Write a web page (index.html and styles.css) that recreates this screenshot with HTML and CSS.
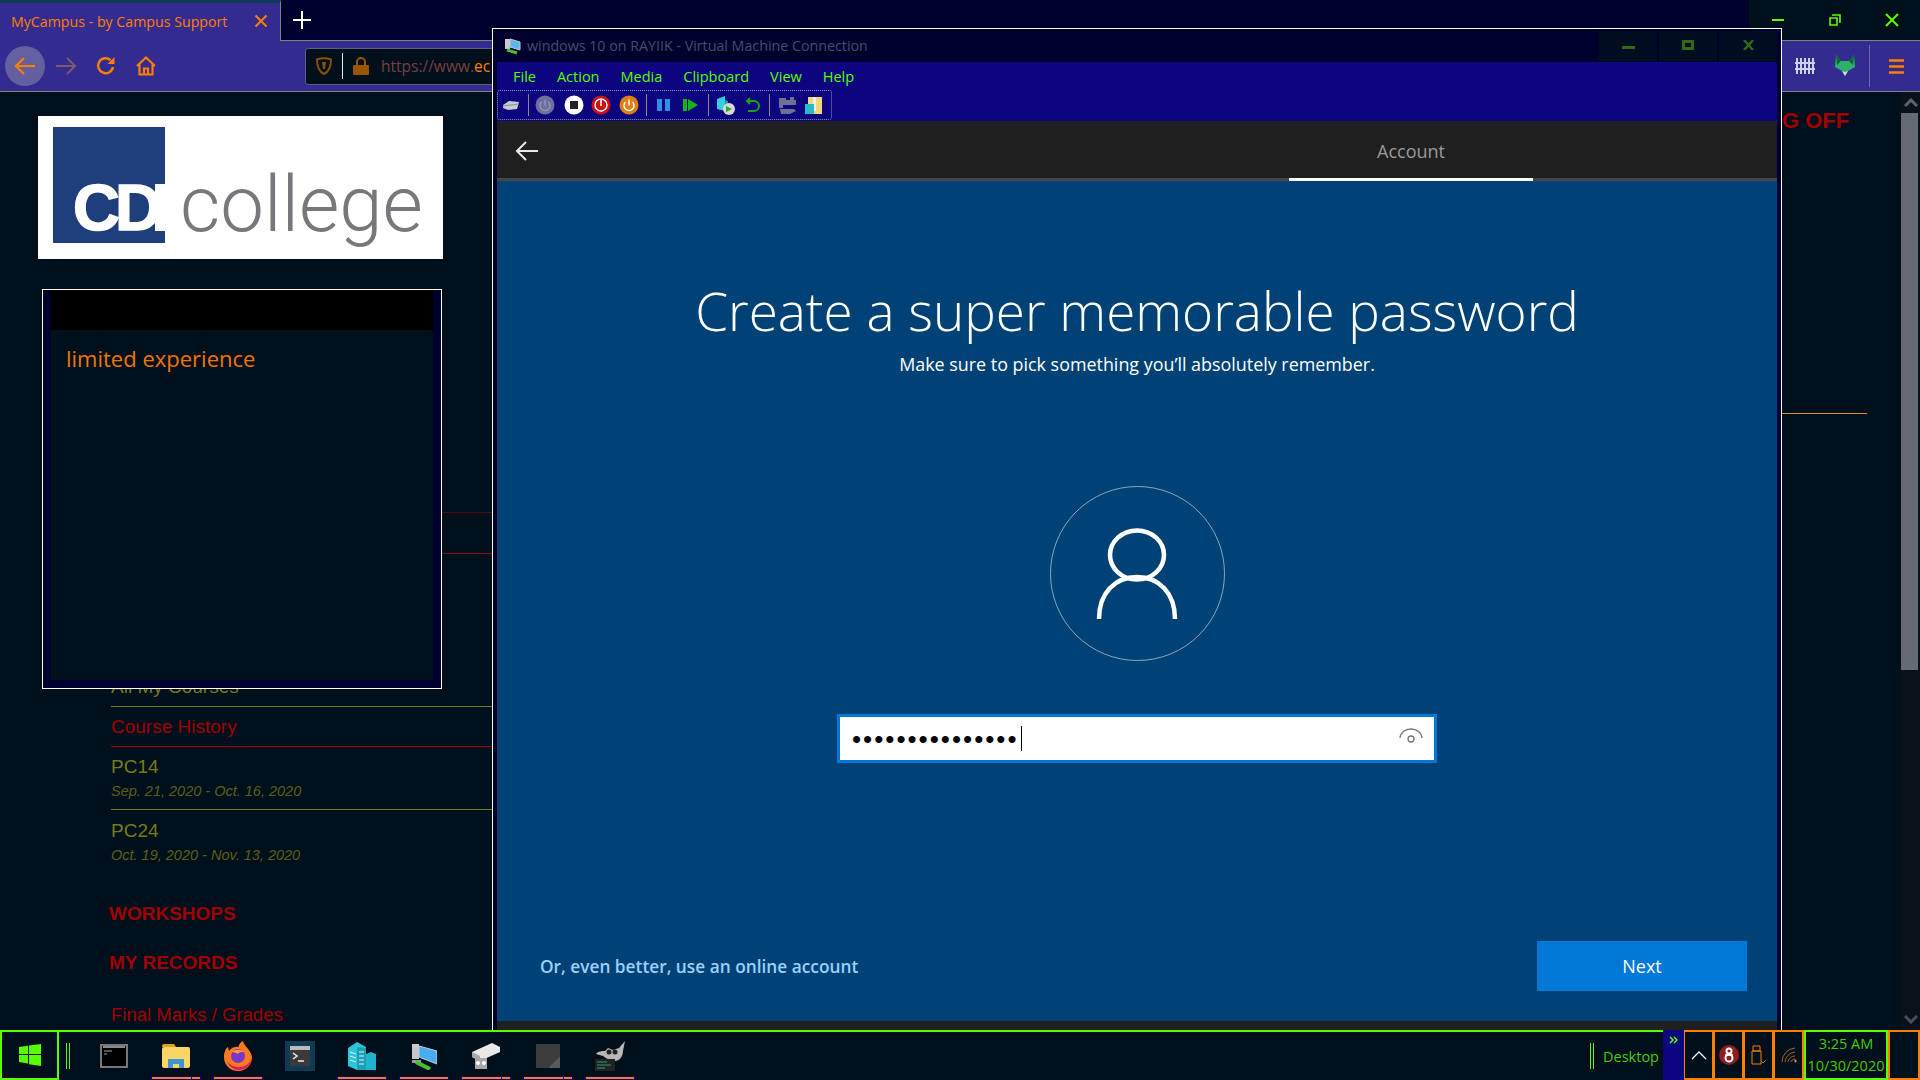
FILE: index.html
```html
<!DOCTYPE html>
<html lang="en">
<head>
<meta charset="UTF-8">
<title>MyCampus - by Campus Support</title>
<link rel="stylesheet" href="styles.css">
</head>
<body>

<!-- Browser behind the VM window -->
<div class="browser">
  <div class="tabstrip">
    <div class="tab">
      <span class="tab-title">MyCampus - by Campus Support</span>
      <svg class="tab-close" width="14" height="14" viewBox="0 0 14 14"><path d="M1.5 1.5l11 11M12.5 1.5l-11 11" stroke="#ff7f00" stroke-width="2"/></svg>
    </div>
    <div class="tab-rest">
      <svg class="new-tab" width="18" height="18" viewBox="0 0 18 18"><path d="M9 0v18M0 9h18" stroke="#fff" stroke-width="2"/></svg>
    </div>
    <div class="win-controls">
      <svg width="12" height="12" viewBox="0 0 12 12"><path d="M0 6h12" stroke="#55ff00" stroke-width="2"/></svg>
      <svg width="12" height="12" viewBox="0 0 12 12"><path d="M1 4h7v7H1zM4 2V1h7v7h-1" fill="none" stroke="#55ff00" stroke-width="1.6"/></svg>
      <svg width="14" height="14" viewBox="0 0 14 14"><path d="M1 1l12 12M13 1L1 13" stroke="#55ff00" stroke-width="2"/></svg>
    </div>
  </div>

  <div class="toolbar">
    <div class="back-btn">
      <svg width="22" height="20" viewBox="0 0 22 20"><path d="M21 10H2M10 2l-8 8 8 8" fill="none" stroke="#ff7f00" stroke-width="2.2"/></svg>
    </div>
    <svg class="fwd" width="22" height="20" viewBox="0 0 22 20"><path d="M1 10h19M12 2l8 8-8 8" fill="none" stroke="#7d5a6a" stroke-width="2"/></svg>
    <svg class="reload" width="20" height="20" viewBox="0 0 20 20"><path d="M17 11a7.5 7.5 0 1 1-2.5-7" fill="none" stroke="#ff7f00" stroke-width="2.4"/><path d="M18.500 1v7h-7z" fill="#ff7f00"/></svg>
    <svg class="home" width="20" height="20" viewBox="0 0 20 20"><path d="M1 10l9-8.500L19 10M3.500 8.500V18.500h13V8.500M8 18.500v-6h4v6" fill="none" stroke="#ff7f00" stroke-width="2.200"/></svg>
    <div class="urlbar">
      <svg width="16" height="18" viewBox="0 0 16 18"><path d="M1 2.500C5 1 11 1 15 2.500 15 10 13 14.500 8 17 3 14.500 1 10 1 2.500z" fill="none" stroke="#8a4f00" stroke-width="2"/><path d="M6 5h4l-1 7H7z" fill="#8a4f00"/></svg>
      <span class="url-sep"></span>
      <svg width="16" height="18" viewBox="0 0 16 18"><path d="M4 8V5a4 4 0 0 1 8 0v3" fill="none" stroke="#995500" stroke-width="2"/><rect y="8" width="16" height="10" rx="1" fill="#995500"/></svg>
      <span class="url-text"><span class="url-dim">https://www.</span><span class="url-host">ec</span></span>
    </div>
    <div class="toolbar-right">
      <svg width="20" height="18" viewBox="0 0 20 18"><path d="M2 1v16M6 1v16M10 1v16M14 1v16M18 1v16M0 6h20M0 12h20" fill="none" stroke="#cfcfe6" stroke-width="2"/></svg>
      <svg width="20" height="22" viewBox="0 0 20 22"><path d="M1 0l5 6h8l5-6 1 12-7 4-3 5-3-5-7-4z" fill="#2faf6c"/><path d="M1 0l5 6-4 4zM19 0l-5 6 4 4z" fill="#086b2d"/><path d="M7 16l3 1 3-1-3 5z" fill="#d5d5e5"/></svg>
      <span class="toolbar-sep"></span>
      <svg width="15" height="15" viewBox="0 0 15 15"><path d="M0 1.500h15M0 7.500h15M0 13.500h15" stroke="#ff7f00" stroke-width="2.400"/></svg>
    </div>
  </div>

  <div class="page">
    <div class="sidebar">
      <div class="logo">
        <div class="logo-mark"><span class="logo-cd">CD</span><span class="logo-strip"></span></div>
        <span class="logo-word">college</span>
      </div>
      <ul class="nav">
        <li class="nav-row row-dim"></li>
        <li class="nav-row row-red-line"></li>
        <li class="nav-row row-courses">All My Courses</li>
        <li class="nav-row row-history">Course History</li>
        <li class="nav-row row-course">PC14<em>Sep. 21, 2020 - Oct. 16, 2020</em></li>
        <li class="nav-row row-course row-last">PC24<em>Oct. 19, 2020 - Nov. 13, 2020</em></li>
      </ul>
      <h3 class="nav-head">WORKSHOPS</h3>
      <h3 class="nav-head">MY RECORDS</h3>
      <p class="nav-link">Final Marks / Grades</p>
    </div>
    <div class="page-right">
      <div class="log-off">G OFF</div>
      <div class="right-line"></div>
    </div>
    <div class="scrollbar">
      <div class="scroll-btn"><svg width="14" height="9" viewBox="0 0 14 9"><path d="M1 8l6-6 6 6" fill="none" stroke="#5d6268" stroke-width="3"/></svg></div>
      <div class="scroll-thumb"></div>
      <div class="scroll-track"><svg width="14" height="9" viewBox="0 0 14 9"><path d="M1 1l6 6 6-6" fill="none" stroke="#4a4f55" stroke-width="3"/></svg></div>
    </div>
  </div>
</div>

<!-- Popup over the sidebar -->
<div class="popup">
  <div class="popup-head"></div>
  <div class="popup-body">limited experience</div>
</div>

<!-- Virtual Machine Connection window -->
<div class="vm">
  <div class="vm-title">
    <svg width="18" height="18" viewBox="0 0 18 18"><path d="M6 2l10 3v8L6 10z" fill="#58b6ee" stroke="#ccc"/><rect x="1" y="2" width="5" height="10" fill="#c9c9c9"/><path d="M3 13l10 3" stroke="#4bbb3f" stroke-width="3"/></svg>
    <span class="vm-title-text">windows 10 on RAYIIK - Virtual Machine Connection</span>
    <div class="vm-controls">
      <span class="vm-ctl"><svg class="ctl-min" width="13" height="3" viewBox="0 0 13 3"><rect width="13" height="3" fill="#2f6b17"/></svg></span>
      <span class="vm-ctl"><svg width="12" height="10" viewBox="0 0 12 10"><rect x="1.500" y="1.500" width="9" height="7" fill="none" stroke="#2f6b17" stroke-width="3"/></svg></span>
      <span class="vm-ctl"><svg width="11" height="10" viewBox="0 0 11 10"><path d="M1 0l9 10M10 0L1 10" stroke="#2f6b17" stroke-width="2.500"/></svg></span>
    </div>
  </div>
  <div class="vm-menu">
    <span>File</span><span>Action</span><span>Media</span><span>Clipboard</span><span>View</span><span>Help</span>
  </div>
  <div class="vm-tools-row">
    <div class="vm-tools">
      <svg width="18" height="12" viewBox="0 0 18 12"><path d="M1 6l6-4 10 1-2 7-9 1-5-2z" fill="#c9c9d6"/><path d="M1 7l16-2" stroke="#8888a0"/></svg>
      <i class="t-sep"></i>
      <svg width="20" height="20" viewBox="0 0 20 20"><circle cx="10" cy="10" r="9.500" fill="#6f6f9e"/><path d="M6.500 7a5 5 0 1 0 7 0M10 4.500v6" fill="none" stroke="#9a9ac0" stroke-width="1.200"/></svg>
      <svg width="20" height="20" viewBox="0 0 20 20"><circle cx="10" cy="10" r="9.500" fill="#fff"/><rect x="6" y="6" width="8" height="8" fill="#222"/></svg>
      <svg width="20" height="20" viewBox="0 0 20 20"><circle cx="10" cy="10" r="9.500" fill="#d00f12"/><circle cx="10" cy="10" r="6" fill="none" stroke="#fff" stroke-width="1.400"/><path d="M10 5v6" stroke="#fff" stroke-width="1.600"/></svg>
      <svg width="20" height="20" viewBox="0 0 20 20"><circle cx="10" cy="10" r="9.500" fill="#e07f10"/><path d="M6.500 7a5 5 0 1 0 7 0M10 4.500v6" fill="none" stroke="#fff" stroke-width="1.400"/></svg>
      <i class="t-sep"></i>
      <svg width="14" height="14" viewBox="0 0 14 14"><path d="M0 1h5v12H0zM8 1h5v12H8z" fill="#2f8fe0"/></svg>
      <svg width="16" height="14" viewBox="0 0 16 14"><path d="M0 1h4v12H0zM5 1l10 6-10 6z" fill="#15b51a"/></svg>
      <i class="t-sep"></i>
      <svg width="20" height="20" viewBox="0 0 20 20"><path d="M1 4l8-3v15l-8-2z" fill="#35cde0"/><path d="M9 5l3 1v8H9z" fill="#1d9bb0"/><circle cx="13" cy="14" r="6" fill="#d8d8d8"/><path d="M10 11l6 3-6 3z" fill="#2ca52c"/></svg>
      <svg width="15" height="16" viewBox="0 0 15 16"><path d="M5 1L2 4l3 3M2.500 4H9a4.500 4.500 0 0 1 0 10H3" fill="none" stroke="#15a51a" stroke-width="2"/></svg>
      <i class="t-sep"></i>
      <svg width="20" height="20" viewBox="0 0 20 20"><path d="M1 3h7v2h4V2h4v3h2v5H5v3H1zM2 14h14l2 2-6 3H3z" fill="#6f6f94"/></svg>
      <svg width="18" height="20" viewBox="0 0 18 20"><path d="M3 2h14v17H3z" fill="#f2d675"/><path d="M8 2h3v14H8z" fill="#eee"/><rect y="9" width="9" height="10" fill="#27b9cc"/></svg>
    </div>
  </div>
  <div class="oobe-head">
    <svg class="oobe-back" width="24" height="20" viewBox="0 0 24 20"><path d="M23 10H2M11 1l-9 9 9 9" fill="none" stroke="#e8e8e8" stroke-width="2"/></svg>
    <span class="oobe-tab">Account</span>
  </div>
  <div class="oobe">
    <h1>Create a super memorable password</h1>
    <p class="oobe-sub">Make sure to pick something you’ll absolutely remember.</p>
    <div class="avatar">
      <svg width="84" height="94" viewBox="0 0 84 94"><ellipse cx="42" cy="28" rx="27" ry="24.500" fill="none" stroke="#fff" stroke-width="4.500"/><path d="M4 92c0-26 16-42 38-42s38 16 38 42" fill="none" stroke="#fff" stroke-width="4.500"/></svg>
    </div>
    <div class="pw-box">
      <span class="pw-dots">•••••••••••••••</span><span class="pw-caret"></span>
      <svg class="pw-eye" width="24" height="16" viewBox="0 0 24 16"><path d="M1 10a11 9 0 0 1 22 0" fill="none" stroke="#777" stroke-width="1.300"/><circle cx="12" cy="11" r="3" fill="none" stroke="#777" stroke-width="1.300"/></svg>
    </div>
    <div class="oobe-foot">
      <span class="oobe-link">Or, even better, use an online account</span>
      <span class="next-btn">Next</span>
    </div>
  </div>
  <div class="oobe-bottom"></div>
</div>

<!-- Taskbar -->
<div class="taskbar">
  <div class="start">
    <svg width="22" height="22" viewBox="0 0 22 22"><path d="M0 3l9-1.300V10H0zM10 1.500L22 0v10H10zM0 11h9v8.500L0 18zM10 11h12v11l-12-1.700z" fill="#55ff00"/></svg>
  </div>
  <span class="double-line"></span>
  <div class="task-list">
    <div class="task">
      <svg width="28" height="24" viewBox="0 0 28 24"><rect x="1" y="1" width="26" height="22" fill="#000" stroke="#777" stroke-width="2"/><path d="M3 3h22" stroke="#888" stroke-width="2"/><path d="M4 7h8M4 10h3" stroke="#aaa"/></svg>
    </div>
    <div class="task">
      <svg width="28" height="24" viewBox="0 0 28 24"><path d="M0 2q0-2 2-2h10l2 3h-14z" fill="#d9a21f"/><rect y="3" width="28" height="21" rx="2" fill="#fbd466"/><path d="M6 24v-9h16v9h-5v-4h-6v4z" fill="#3e94d6"/></svg>
      <i class="bar bar-multi"></i>
    </div>
    <div class="task">
      <svg width="30" height="30" viewBox="0 0 30 30"><path d="M20 0c1 5 8 9 9 16 0 8-6 14-14 14S1 24 1 16c0-5 2-9 4-10l1 4c2-4 8-5 10-4-1-2 2-5 4-6z" fill="#ff7a1f"/><path d="M4 20c2 6 7 9 12 9 6 0 11-4 12-10-3 5-8 8-14 7-4 0-8-3-10-6z" fill="#e3155e"/><circle cx="15" cy="15" r="7" fill="#7a35c9"/><path d="M9 11c3-3 9-3 12 0-3 0-5 0-6 2-2-1-4-2-6-2z" fill="#ff9c30"/></svg>
      <i class="bar"></i>
    </div>
    <div class="task">
      <div class="ps-tile"><svg width="20" height="20" viewBox="0 0 20 20"><rect width="20" height="20" fill="#3a3a3a"/><rect width="20" height="4" fill="#bbb"/><path d="M3 7l4 3-4 3M8 15h6" fill="none" stroke="#eee" stroke-width="1.500"/></svg></div>
    </div>
    <div class="task">
      <svg width="28" height="28" viewBox="0 0 28 28"><path d="M0 6l9-6 9 5v23H9L0 24z" fill="#2bc6da"/><path d="M9 5l9 1v22H9z" fill="#1aa0b8"/><path d="M18 12l5-2 5 2v16H18z" fill="#1fb4cc"/><path d="M2 10l6 2M2 14l6 2M2 18l6 2M11 10h5M11 14h5M11 18h5M11 22h5" stroke="#d8f6fa"/></svg>
      <i class="bar"></i>
    </div>
    <div class="task">
      <svg width="26" height="28" viewBox="0 0 26 28"><path d="M8 4l18 5v13L8 15z" fill="#46aef0" stroke="#ccc"/><path d="M1 2h7v15H1z" fill="#c8c8c8"/><path d="M1 18h9v3H1z" fill="#999"/><path d="M5 20l14 7" stroke="#48c13a" stroke-width="4"/></svg>
      <i class="bar"></i>
    </div>
    <div class="task">
      <svg width="28" height="26" viewBox="0 0 28 26"><path d="M0 9l20-9 8 4v5L8 18l-8-4z" fill="#e8e8e8"/><path d="M0 9l8 4v5l-8-4zM3 15h12v11H3z" fill="#a8a8a8"/><circle cx="6" cy="20" r="2" fill="#fff"/><circle cx="12" cy="20" r="2" fill="#fff"/></svg>
      <i class="bar bar-multi"></i>
    </div>
    <div class="task">
      <svg width="24" height="24" viewBox="0 0 24 24"><path d="M0 0h24v12L12 24H0z" fill="#3c3c3c"/><path d="M24 12v12H12z" fill="#5a5a5a"/></svg>
      <i class="bar bar-multi"></i>
    </div>
    <div class="task">
      <svg width="30" height="30" viewBox="0 0 30 30"><path d="M30 0l-2 10c0 6-4 10-8 10-5 0-9-3-12-5l-7-2c2-3 6-3 9-3l3-3 5 2 6-2z" fill="#b8b8b8"/><circle cx="14" cy="11" r="2.500" fill="#222"/><circle cx="20" cy="11" r="2.500" fill="#222"/><rect y="18" width="20" height="12" fill="#222"/><path d="M2 21h10M2 24h14M2 27h8" stroke="#2a9a7a"/></svg>
      <i class="bar"></i>
    </div>
  </div>
  <div class="tray">
    <span class="double-line"></span>
    <span class="desktop-label">Desktop</span>
    <span class="desktop-more"><svg width="10" height="8" viewBox="0 0 10 8"><path d="M1 1l3 3-3 3M5 1l3 3-3 3" fill="none" stroke="#55ff00" stroke-width="1.500"/></svg></span>
    <span class="tray-box"><svg width="16" height="9" viewBox="0 0 16 9"><path d="M1 8l7-7 7 7" fill="none" stroke="#fff" stroke-width="1.300"/></svg></span>
    <span class="tray-box"><svg width="20" height="20" viewBox="0 0 20 20"><circle cx="10" cy="10" r="10" fill="#8f1d1d"/><circle cx="10" cy="13" r="3.500" fill="none" stroke="#fff" stroke-width="2"/><circle cx="10" cy="6" r="2.500" fill="none" stroke="#fff" stroke-width="2"/><path d="M6 10h8" stroke="#fff" stroke-width="1.500"/></svg></span>
    <span class="tray-box"><svg width="16" height="20" viewBox="0 0 16 20"><path d="M2 1h7v5H2zM1 6h9v13H1z" fill="none" stroke="#ff7f00"/><path d="M10 16l2 2 3-3" fill="none" stroke="#8a6a40"/></svg></span>
    <span class="tray-box"><svg width="16" height="16" viewBox="0 0 16 16"><path d="M1 15A14 14 0 0 1 14 1M4 15A11 11 0 0 1 14 5M7 15a7 7 0 0 1 7-6M10 15a4 4 0 0 1 4-3" fill="none" stroke="#a8651a"/><path d="M13 14h3M14.500 12.500v3" stroke="#ff7f00"/></svg></span>
    <span class="clock"><span>3:25 AM</span><span>10/30/2020</span></span>
    <span class="tray-end"></span>
  </div>
</div>

</body>
</html>
```

FILE: styles.css
```css
* {
  box-sizing: border-box;
}
html, body {
  margin: 0;
  padding: 0;
}
body {
  position: relative;
  width: 1920px;
  height: 1080px;
  overflow: hidden;
  display: flex;
  flex-direction: column;
  background-color: #000f1c;
  font-family: "Liberation Sans", Arial, sans-serif;
}
svg {
  display: block;
  flex: none;
}

/* browser */
.browser {
  height: 1030px;
  display: flex;
  flex-direction: column;
}
.tabstrip {
  height: 41px;
  display: flex;
  background-color: #00002e;
  font-family: "Open Sans", sans-serif;
}
.tab {
  width: 281px;
  border-top: 3px solid #0f3a5a;
  border-right: 1px solid #808080;
  background-color: #332b8f;
  display: flex;
  align-items: center;
  padding: 0 12px 2px 11px;
  justify-content: space-between;
}
.tab-title {
  color: #ff7f00;
  font-size: 14.2px;
  white-space: nowrap;
}
.tab-rest {
  flex: 1;
  border-bottom: 1px solid #808080;
  padding: 11px 0 0 12px;
}
.win-controls {
  width: 171px;
  background-color: #000f1c;
  border-bottom: 1px solid #808080;
  display: flex;
  align-items: center;
  padding: 0 21px 0 23px;
  justify-content: space-between;
}
.toolbar {
  height: 51px;
  background-color: #332b8f;
  border-bottom: 1px solid #808080;
  display: flex;
  align-items: center;
}
.back-btn {
  width: 40px;
  height: 40px;
  margin-left: 5px;
  border-radius: 50%;
  background-color: #645f9f;
  display: flex;
  align-items: center;
  justify-content: center;
}
.fwd {
  margin-left: 10px;
}
.reload {
  margin-left: 19px;
}
.home {
  margin-left: 20px;
}
.urlbar {
  width: 400px;
  height: 37px;
  margin-left: 149px;
  background-color: #000f1c;
  border: 1px solid #5d5d80;
  border-radius: 3px;
  display: flex;
  align-items: center;
  padding-left: 10px;
  overflow: hidden;
}
.url-sep {
  width: 1px;
  height: 26px;
  margin: 0 10px;
  background-color: #eee;
}
.url-text {
  margin-left: 12px;
  font-family: "Open Sans", sans-serif;
  font-size: 15.5px;
  white-space: nowrap;
}
.url-dim {
  color: #7a4040;
}
.url-host {
  color: #ff7f00;
}
.toolbar-right {
  margin-left: auto;
  width: 125px;
  display: flex;
  align-items: center;
}
.toolbar-right svg:nth-child(2) {
  margin-left: 20px;
}
.toolbar-sep {
  width: 1px;
  height: 42px;
  margin: 0 19px 0 14px;
  background-color: #6d68a8;
}

/* page */
.page {
  flex: 1;
  min-height: 0;
  display: flex;
  overflow: hidden;
}
.sidebar {
  width: 1782px;
  padding-top: 24px;
}
.logo {
  width: 405px;
  height: 143px;
  margin-left: 38px;
  background-color: #fff;
  display: flex;
  padding: 11px 0 0 15px;
}
.logo-mark {
  position: relative;
  width: 112px;
  height: 116px;
  background-color: #1f3f7c;
}
.logo-cd {
  position: absolute;
  left: 20px;
  top: 48px;
  color: #fff;
  font-size: 65px;
  line-height: 66px;
  font-weight: bold;
  letter-spacing: -5px;
  -webkit-text-stroke: 1.5px #fff;
}
.logo-strip {
  position: absolute;
  right: 0;
  top: 57px;
  width: 10px;
  height: 47px;
  background-color: #fff;
}
.logo-word {
  margin: 33px 0 0 15px;
  color: #77777c;
  font-family: Roboto, sans-serif;
  font-weight: 300;
  font-size: 78px;
  line-height: 90px;
}
.nav {
  list-style: none;
  margin: 0 0 0 111px;
  padding: 0;
  width: 381px;
}
.nav-row {
  height: 40px;
  border-bottom: 1px solid #7a7a14;
  color: #7a7a14;
  font-size: 19px;
  line-height: 21px;
  padding-bottom: 9px;
  display: flex;
  flex-direction: column;
  justify-content: flex-end;
}
.nav-row em {
  font-size: 14.5px;
  line-height: 20px;
  margin-top: 4px;
  color: #5f5f14;
}
.row-dim {
  height: 254px;
  border-bottom-color: #4a1010;
}
.row-red-line {
  height: 41px;
  border-bottom-color: #8a1010;
}
.row-courses {
  height: 153px;
}
.row-history {
  color: #a00000;
  border-bottom-color: #a00000;
}
.row-course {
  height: 63px;
  padding-bottom: 8px;
}
.row-last {
  border-bottom: 0;
  height: 64px;
  padding-bottom: 9px;
}
.nav-head {
  margin: 0 0 28px;
  padding-left: 109px;
  color: #a00000;
  font-size: 19px;
  line-height: 21px;
  font-weight: bold;
}
.nav-head:first-of-type {
  margin-top: 29px;
}
.nav-link {
  margin: 31px 0 0;
  padding-left: 111px;
  color: #a00000;
  font-size: 18.5px;
  line-height: 21px;
}
.page-right {
  width: 119px;
  padding-top: 16px;
}
.log-off {
  color: #a00000;
  font-size: 22px;
  line-height: 26px;
  font-weight: bold;
}
.right-line {
  width: 85px;
  height: 1px;
  margin-top: 279px;
  background-color: #e88a2c;
}
.scrollbar {
  width: 19px;
  display: flex;
  flex-direction: column;
  background-color: #0a111a;
}
.scroll-btn {
  height: 21px;
  display: flex;
  align-items: center;
  justify-content: center;
}
.scroll-thumb {
  height: 557px;
  width: 17px;
  background-color: #666b73;
}
.scroll-track {
  flex: 1;
  display: flex;
  align-items: flex-end;
  justify-content: center;
  padding-bottom: 6px;
}

/* popup */
.popup {
  position: absolute;
  left: 42px;
  top: 289px;
  width: 400px;
  height: 400px;
  border: 1px solid #fff;
  background-color: #00002e;
  padding: 0 8px 8px;
  display: flex;
  flex-direction: column;
}
.popup-head {
  height: 40px;
  background-color: #000;
}
.popup-body {
  flex: 1;
  background-color: #000f1c;
  color: #ef7600;
  font-family: "Open Sans", sans-serif;
  font-size: 22px;
  padding: 13px 15px;
}

/* vm window */
.vm {
  position: absolute;
  left: 492px;
  top: 28px;
  width: 1290px;
  height: 1002px;
  border: solid #fff;
  border-width: 1px 1px 0;
  background-color: #00002e;
  padding: 0 4px 0;
  display: flex;
  flex-direction: column;
}
.vm-title {
  height: 33px;
  display: flex;
  align-items: center;
  padding-left: 7px;
  font-family: "Open Sans", sans-serif;
}
.vm-title-text {
  margin-left: 5px;
  color: #4c4c66;
  font-size: 14.25px;
  white-space: nowrap;
}
.vm-controls {
  margin-left: auto;
  display: flex;
  align-self: flex-start;
  gap: 2px;
  padding-top: 2px;
}
.vm-ctl {
  width: 58px;
  height: 30px;
  padding-bottom: 3px;
  background-color: #000d20;
  display: flex;
  align-items: center;
  justify-content: center;
}
.ctl-min {
  margin-top: 6px;
}
.vm-menu {
  height: 29px;
  background-color: #0d0480;
  display: flex;
  align-items: center;
  padding-left: 16px;
  gap: 21px;
  color: #55ff00;
  font-family: "Open Sans", sans-serif;
  font-size: 14.5px;
}
.vm-tools-row {
  height: 30px;
  background-color: #0d0480;
}
.vm-tools {
  width: 335px;
  height: 30px;
  margin-top: -1px;
  border: 1px dotted #8f8fc0;
  border-radius: 3px;
  display: flex;
  align-items: center;
}
.vm-tools > :nth-child(1) { margin-left: 4px; }
.vm-tools > :nth-child(2) { margin-left: 8px; }
.vm-tools > :nth-child(3) { margin-left: 6px; }
.vm-tools > :nth-child(4) { margin-left: 9px; }
.vm-tools > :nth-child(5) { margin-left: 7px; }
.vm-tools > :nth-child(6) { margin-left: 8px; }
.vm-tools > :nth-child(7) { margin-left: 7px; }
.vm-tools > :nth-child(8) { margin-left: 10px; }
.vm-tools > :nth-child(9) { margin-left: 12px; }
.vm-tools > :nth-child(10) { margin-left: 9px; }
.vm-tools > :nth-child(11) { margin-left: 7px; }
.vm-tools > :nth-child(12) { margin-left: 9px; }
.vm-tools > :nth-child(13) { margin-left: 9px; }
.vm-tools > :nth-child(14) { margin-left: 8px; }
.vm-tools > :nth-child(15) { margin-left: 7px; }
.t-sep {
  width: 1px;
  height: 22px;
  background-color: #8a8a80;
}
.oobe-head {
  height: 60px;
  flex: none;
  background-color: #1f1f1f;
  border-bottom: 3px solid #454545;
  display: flex;
  align-items: center;
  padding: 3px 0 0 18px;
  position: relative;
  font-family: "Open Sans", sans-serif;
}
.oobe-tab {
  position: absolute;
  left: 792px;
  bottom: -3px;
  width: 244px;
  height: 60px;
  border-bottom: 3px solid #fff;
  color: #9a9a9a;
  font-size: 18px;
  text-align: center;
  line-height: 60px;
}
.oobe {
  flex: 1;
  background-color: #004275;
  display: flex;
  flex-direction: column;
  align-items: center;
  color: #fff;
  font-family: "Open Sans", sans-serif;
}
.oobe h1 {
  margin: 97px 0 0;
  font-size: 53px;
  line-height: 66px;
  font-weight: 300;
  white-space: nowrap;
}
.oobe-sub {
  margin: 8px 0 0;
  font-size: 17.9px;
  line-height: 24px;
}
.avatar {
  width: 175px;
  height: 175px;
  margin-top: 110px;
  border: 1.500px solid #8aa5bf;
  border-radius: 50%;
  display: flex;
  align-items: center;
  justify-content: center;
}
.pw-box {
  width: 600px;
  height: 49px;
  margin-top: 53px;
  background-color: #fff;
  border: 3px solid #0078d7;
  display: flex;
  align-items: center;
  padding-left: 12px;
  color: #000;
}
.pw-dots {
  font-family: "Liberation Sans", sans-serif;
  font-size: 26px;
  letter-spacing: 2px;
  line-height: 20px;
}
.pw-caret {
  width: 1px;
  height: 25px;
  margin-left: 2px;
  background-color: #000;
}
.pw-eye {
  margin-left: auto;
  margin-right: 11px;
  margin-bottom: 6px;
}
.oobe-foot {
  align-self: stretch;
  display: flex;
  align-items: center;
  justify-content: space-between;
  margin-top: 178px;
  padding: 0 30px 0 43px;
}
.oobe-link {
  color: #99d1ff;
  font-size: 17.3px;
  font-weight: 600;
}
.next-btn {
  width: 210px;
  height: 50px;
  background-color: #0078d7;
  text-align: center;
  line-height: 50px;
  font-size: 18px;
}
.oobe-bottom {
  height: 9px;
  flex: none;
  background-color: #1f1f1f;
}

/* taskbar */
.taskbar {
  height: 50px;
  display: flex;
  align-items: stretch;
  background-color: #000f1c;
  border-top: 2px solid #55ff00;
  position: relative;
  z-index: 2;
}
.start {
  width: 59px;
  margin-top: -2px;
  border: 2px solid #55ff00;
  display: flex;
  align-items: center;
  justify-content: center;
}
.double-line {
  width: 4px;
  height: 26px;
  margin-left: 7px;
  align-self: center;
  border: solid #55ff00;
  border-width: 0 1px;
  flex: none;
}
.task-list {
  display: flex;
  margin-left: 13px;
}
.task {
  width: 62px;
  position: relative;
  display: flex;
  align-items: center;
  justify-content: center;
}
.bar {
  position: absolute;
  left: 6px;
  bottom: 0;
  width: 50px;
  height: 4px;
  background-color: #ff7f00;
  border: 1px solid #0d0480;
}
.bar-multi {
  background-image: linear-gradient(90deg, transparent 39px, #0d0480 39px, #0d0480 40px, transparent 40px);
}
.ps-tile {
  width: 30px;
  height: 30px;
  background-color: #0f3a55;
  display: flex;
  align-items: center;
  justify-content: center;
}
.tray {
  margin-left: auto;
  display: flex;
  align-items: stretch;
  color: #44cc00;
}
.tray .double-line {
  margin-left: 0;
}
.desktop-label {
  margin: 0 4px 0 9px;
  align-self: center;
  font-family: "Open Sans", sans-serif;
  font-size: 14.5px;
}
.desktop-more {
  width: 21px;
  margin-top: -2px;
  background-color: #0d0480;
  padding: 6px 0 0 6px;
}
.tray-box {
  width: 30px;
  margin-top: -2px;
  border: 2px solid #ff7f00;
  border-left-width: 1px;
  display: flex;
  align-items: center;
  justify-content: center;
}
.clock {
  width: 84px;
  margin-top: -2px;
  border: 2px solid #55ff00;
  display: flex;
  flex-direction: column;
  align-items: center;
  justify-content: center;
  font-family: "Open Sans", sans-serif;
  font-size: 14.5px;
  line-height: 22px;
}
.tray-end {
  width: 32px;
  margin-top: -2px;
  border: 2px solid #ff7f00;
}
```
